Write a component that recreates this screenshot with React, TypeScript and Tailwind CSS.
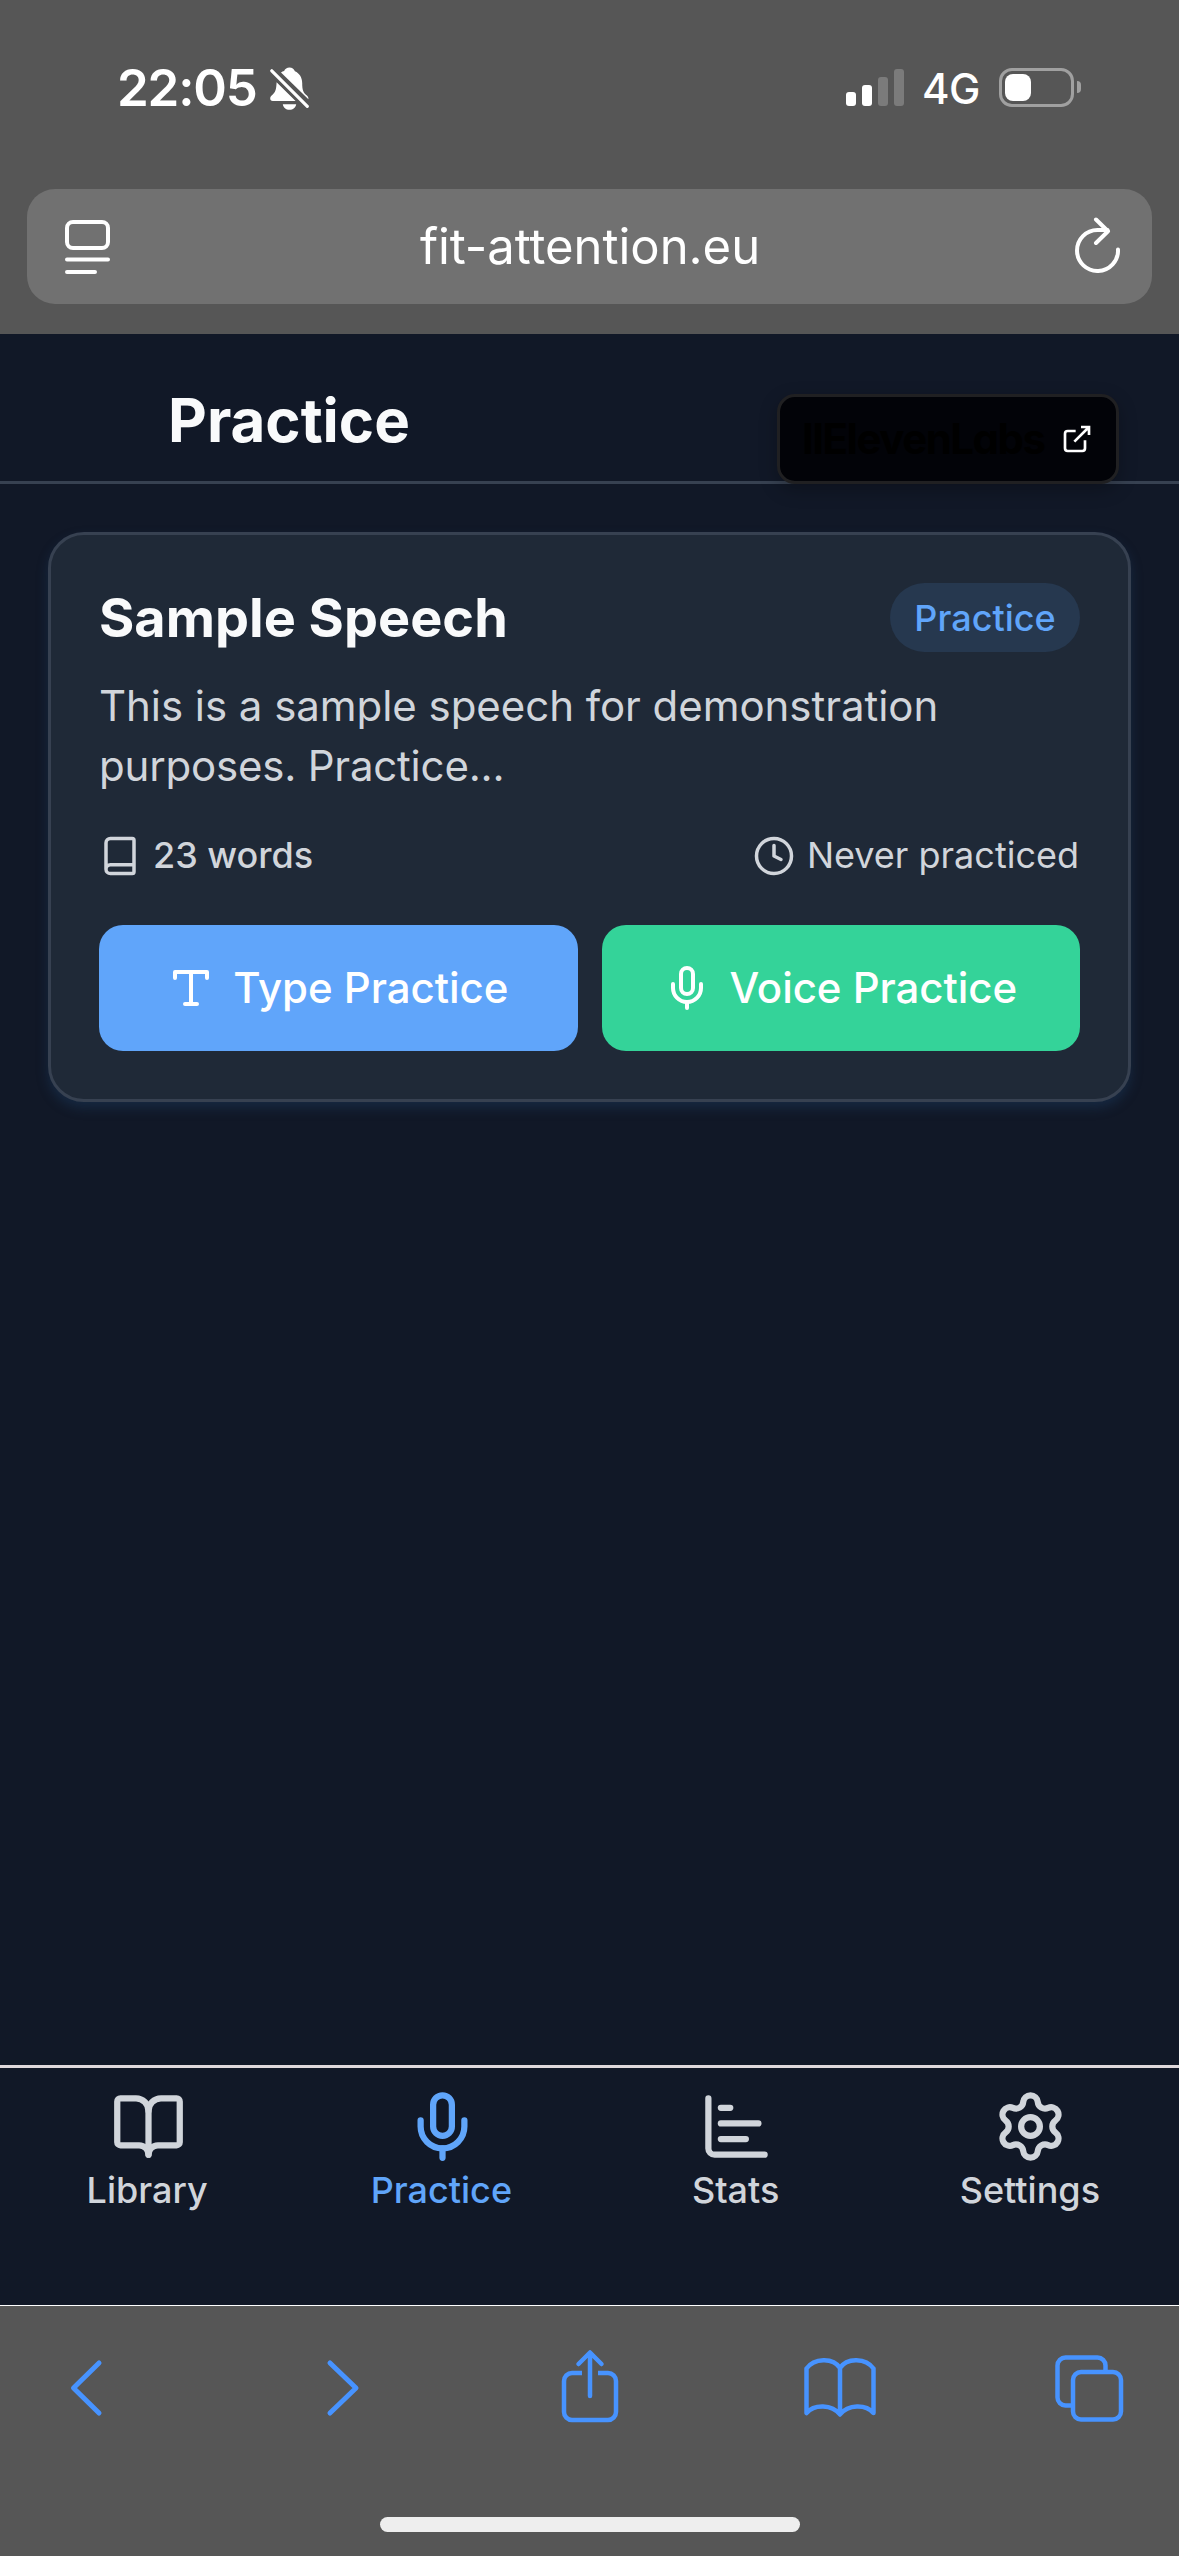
import { BookOpen, ChartBar, Mic, Settings } from "lucide-react";
import type { ReactNode } from "react";

interface Tab {
  label: string;
  icon: typeof Mic;
  active?: boolean;
}

const tabs: Tab[] = [
  { label: "Library", icon: BookOpen },
  { label: "Practice", icon: Mic, active: true },
  { label: "Stats", icon: ChartBar },
  { label: "Settings", icon: Settings },
];

const signalBars = [
  "h-[14px] bg-white",
  "h-[21px] bg-white",
  "h-[29px] bg-[#7b7b7b]",
  "h-[37px] bg-[#7b7b7b]",
];

function StatusBar() {
  return (
    <div className="flex h-[189px] items-start justify-between pl-[117px] pr-[98px] pt-[57px]">
      <div className="flex items-center gap-[13px]">
        <span className="w-[140px] whitespace-nowrap text-[51px] font-semibold leading-[62px] tracking-[-1.2px]">22:05</span>
        <svg className="h-[43px] w-[39px]" viewBox="0 0 39 43" fill="none">
          <path
            d="M19.5 0.5c2.6 0 4.6 1.5 5.4 3.7 4.6 2 7.300 6.300 7.300 11.800 0 7.500 1.200 9.700 4.700 12.600 1 .9 1.500 2 1.500 3.100v.6L11 5.600c1-.7 2-1.200 3.100-1.500C15 1.900 17 .5 19.500.5zM6.600 15.200L25.600 34H2.800C1 34 .2 33 .2 31.500c0-1.200.6-2.200 1.700-3.200 3.400-3 4.400-5.500 4.700-13.100zM12.800 37.200h13.400c-.5 3.300-3.200 5.600-6.700 5.600s-6.200-2.300-6.700-5.600z"
            fill="#fff"
          />
          <path d="M1.500 3.500L37.500 39.500" stroke="#565656" strokeWidth="8" />
          <path d="M1.800 3.800L37.300 39.300" stroke="#fff" strokeWidth="3.200" strokeLinecap="round" />
        </svg>
      </div>
      <div className="flex h-[60px] items-center">
        <div className="flex items-end gap-[6px]">
          {signalBars.map((bar) => (
            <div key={bar} className={`w-[10px] rounded-[3px] ${bar}`} />
          ))}
        </div>
        <span className="ml-[18px] w-[60px] pt-[3px] text-[42px] font-medium leading-[60px] tracking-[-0.5px]">4G</span>
        <div className="ml-[17px] flex h-[39px] w-[75px] items-center rounded-[13px] border-[3px] border-[#a0a0a0] p-[3px]">
          <div className="h-[27px] w-[26px] rounded-[8px] bg-white" />
        </div>
        <div className="ml-[3px] h-[12px] w-[4px] rounded-r-full bg-[#a0a0a0]" />
      </div>
    </div>
  );
}

function AddressBar() {
  return (
    <div className="mx-[27px] flex h-[115px] items-center justify-between rounded-[28px] bg-[#717171] pl-[38px] pr-[32px]">
      <svg className="mt-[1px] h-[54px] w-[45px]" viewBox="0 0 45 54" fill="none" stroke="#fff" strokeWidth="4" strokeLinecap="round">
        <rect x="2" y="2" width="41" height="26" rx="6" />
        <path d="M2 39.500h41M2 52h28" />
      </svg>
      <span className="mr-[5px] text-[49px] leading-[60px] tracking-[-0.05px]">fit-attention.eu</span>
      <svg className="mt-[-4px] h-[56px] w-[45px]" viewBox="0 0 45 56" fill="none" stroke="#fff" strokeWidth="4" strokeLinecap="round" strokeLinejoin="round">
        <path d="M43 32.500A20.500 20.500 0 1 1 22.500 13h10" />
        <path d="M21 2.500L33 14.200 21 26" />
      </svg>
    </div>
  );
}

function ElevenLabsBadge() {
  return (
    <div className="absolute right-[60px] top-[60px] flex h-[90px] w-[342px] items-center rounded-[18px] border-[3px] border-[#202022] bg-[#020308] pl-[22px] shadow-[0_6px_18px_rgba(0,0,0,0.25)]">
      <span className="w-[243px] whitespace-nowrap text-[42px] font-bold leading-[50px] tracking-[-1.500px] text-black [font-feature-settings:'cv11']">
        IIElevenLabs
      </span>
      <svg className="ml-[16px] h-[32px] w-[32px]" viewBox="0 0 24 24" fill="none" stroke="#fff" strokeWidth="2">
        <path d="M18 13v6a2 2 0 0 1-2 2H5a2 2 0 0 1-2-2V8a2 2 0 0 1 2-2h6M15 3h6v6M10 14 21 3" />
      </svg>
    </div>
  );
}

function PracticeButton({ className, icon, children }: { className: string; icon: ReactNode; children: string }) {
  return (
    <button className={`flex h-[126px] flex-1 items-center justify-center gap-[18px] rounded-[24px] pr-[1px] text-[42px] font-medium tracking-[-0.05px] text-white ${className}`}>
      {icon}
      <span className="-mt-[2px]">{children}</span>
    </button>
  );
}

function SpeechCard() {
  return (
    <div className="mx-[48px] mt-[48px] h-[570px] rounded-[36px] border-[3px] border-[#374151] bg-[#1f2937] px-[48px] pt-[48px] shadow-[0_6px_12px_rgba(30,64,104,0.4)]">
      <div className="flex items-center justify-between">
        <h2 className="text-[54px] font-bold leading-[69px] text-[#f9fafb]">Sample Speech</h2>
        <span className="flex h-[69px] w-[190px] items-center justify-center rounded-[36px] bg-[#26384f] text-[36px] font-medium text-[#60a5fa]">
          Practice
        </span>
      </div>
      <p className="mt-[24px] text-[42px] leading-[60px] tracking-[-0.05px]">
        This is a sample speech for demonstration
        <br />
        <span className="tracking-[-0.2px]">purposes. Practice...</span>
      </p>
      <div className="mt-[36px] flex h-[48px] items-center justify-between text-[36px] leading-[48px]">
        <div className="flex items-center gap-[12px] font-medium">
          <svg className="h-[42px] w-[42px]" viewBox="0 0 24 24" fill="none" stroke="currentColor" strokeWidth="2" strokeLinecap="round" strokeLinejoin="round">
            <path d="M4 19.500v-15A2.500 2.500 0 0 1 6.500 2H19a1 1 0 0 1 1 1v18a1 1 0 0 1-1 1H6.500a1 1 0 0 1 0-5H20" />
          </svg>
          <span className="-mt-[2px]">23 words</span>
        </div>
        <div className="flex items-center gap-[12px] pr-[1px]">
          <svg className="h-[42px] w-[42px]" viewBox="0 0 24 24" fill="none" stroke="currentColor" strokeWidth="2" strokeLinecap="round" strokeLinejoin="round">
            <circle cx="12" cy="12" r="10" />
            <path d="M12 6v6l4 2" />
          </svg>
          <span className="-mt-[2px]">Never practiced</span>
        </div>
      </div>
      <div className="mt-[45px] flex gap-[24px]">
        <PracticeButton
          className="bg-[#60a5fa]"
          icon={
            <svg className="h-[48px] w-[48px]" viewBox="0 0 24 24" fill="none" stroke="currentColor" strokeWidth="2" strokeLinecap="round" strokeLinejoin="round">
              <path d="M4 7V4h16v3M9 20h6M12 4v16" />
            </svg>
          }
        >
          Type Practice
        </PracticeButton>
        <PracticeButton className="bg-[#34d399]" icon={<Mic size={48} />}>
          Voice Practice
        </PracticeButton>
      </div>
    </div>
  );
}

function TabBar() {
  return (
    <nav className="grid h-[240px] grid-cols-4 border-t-[3px] border-[#dfd8dc] pr-[2px] pt-[21px]">
      {tabs.map(({ label, icon: Icon, active }) => (
        <div key={label} className={`flex flex-col items-center ${active ? "text-[#60a5fa]" : ""}`}>
          <Icon size={75} className="ml-[2px]" />
          <span className="mt-[4px] text-[36px] font-medium leading-[44px]">{label}</span>
        </div>
      ))}
    </nav>
  );
}

function ToolbarIcon({ children }: { children: ReactNode }) {
  return (
    <svg className="h-[80px] w-[80px]" viewBox="0 0 80 80" fill="none" stroke="#4793ff" strokeWidth="4.500" strokeLinecap="round" strokeLinejoin="round">
      {children}
    </svg>
  );
}

function BrowserToolbar() {
  return (
    <div className="h-[251px] border-t border-white bg-[#565656]">
      <div className="flex justify-between px-[49px] pt-[42px]">
        <ToolbarIcon>
          <path d="M50 15L24.500 40 50 65" strokeWidth="5" />
        </ToolbarIcon>
        <ToolbarIcon>
          <path d="M31 15L57 40 31 65" strokeWidth="5" />
        </ToolbarIcon>
        <ToolbarIcon>
          <path d="M28.500 16L40 4.500 51.500 16M40 5v43" />
          <path d="M32 25h-10a8 8 0 0 0-8 8v31a8 8 0 0 0 8 8h36a8 8 0 0 0 8-8V33a8 8 0 0 0-8-8H48" strokeLinecap="butt" />
        </ToolbarIcon>
        <ToolbarIcon>
          <path d="M6.500 65V20.500C14 10 33 9 40 20c7-11 26-10 33.500.500V65C66 56 48 56 40 66.500 32 56 14 56 6.500 65zM40 20v46" />
        </ToolbarIcon>
        <ToolbarIcon>
          <rect x="7.500" y="9.500" width="48" height="48" rx="8" />
          <rect x="23" y="24" width="48" height="47.500" rx="8" fill="#565656" />
        </ToolbarIcon>
      </div>
      <div className="mx-auto mt-[89px] h-[15px] w-[420px] rounded-full bg-[#eeeeee]" />
    </div>
  );
}

export default function App() {
  return (
    <div className="flex h-[2556px] w-[1179px] flex-col overflow-hidden bg-[#111827] font-['Inter',sans-serif] text-[#d1d5db]">
      <div className="h-[334px] bg-[#565656] text-white">
        <StatusBar />
        <AddressBar />
      </div>
      <header className="relative h-[150px] border-b-[3px] border-[#374151] pl-[168px] pt-[50px]">
        <h1 className="text-[60px] font-bold leading-[73px] text-[#f9fafb]">Practice</h1>
        <ElevenLabsBadge />
      </header>
      <main className="flex-1">
        <SpeechCard />
      </main>
      <TabBar />
      <BrowserToolbar />
    </div>
  );
}
